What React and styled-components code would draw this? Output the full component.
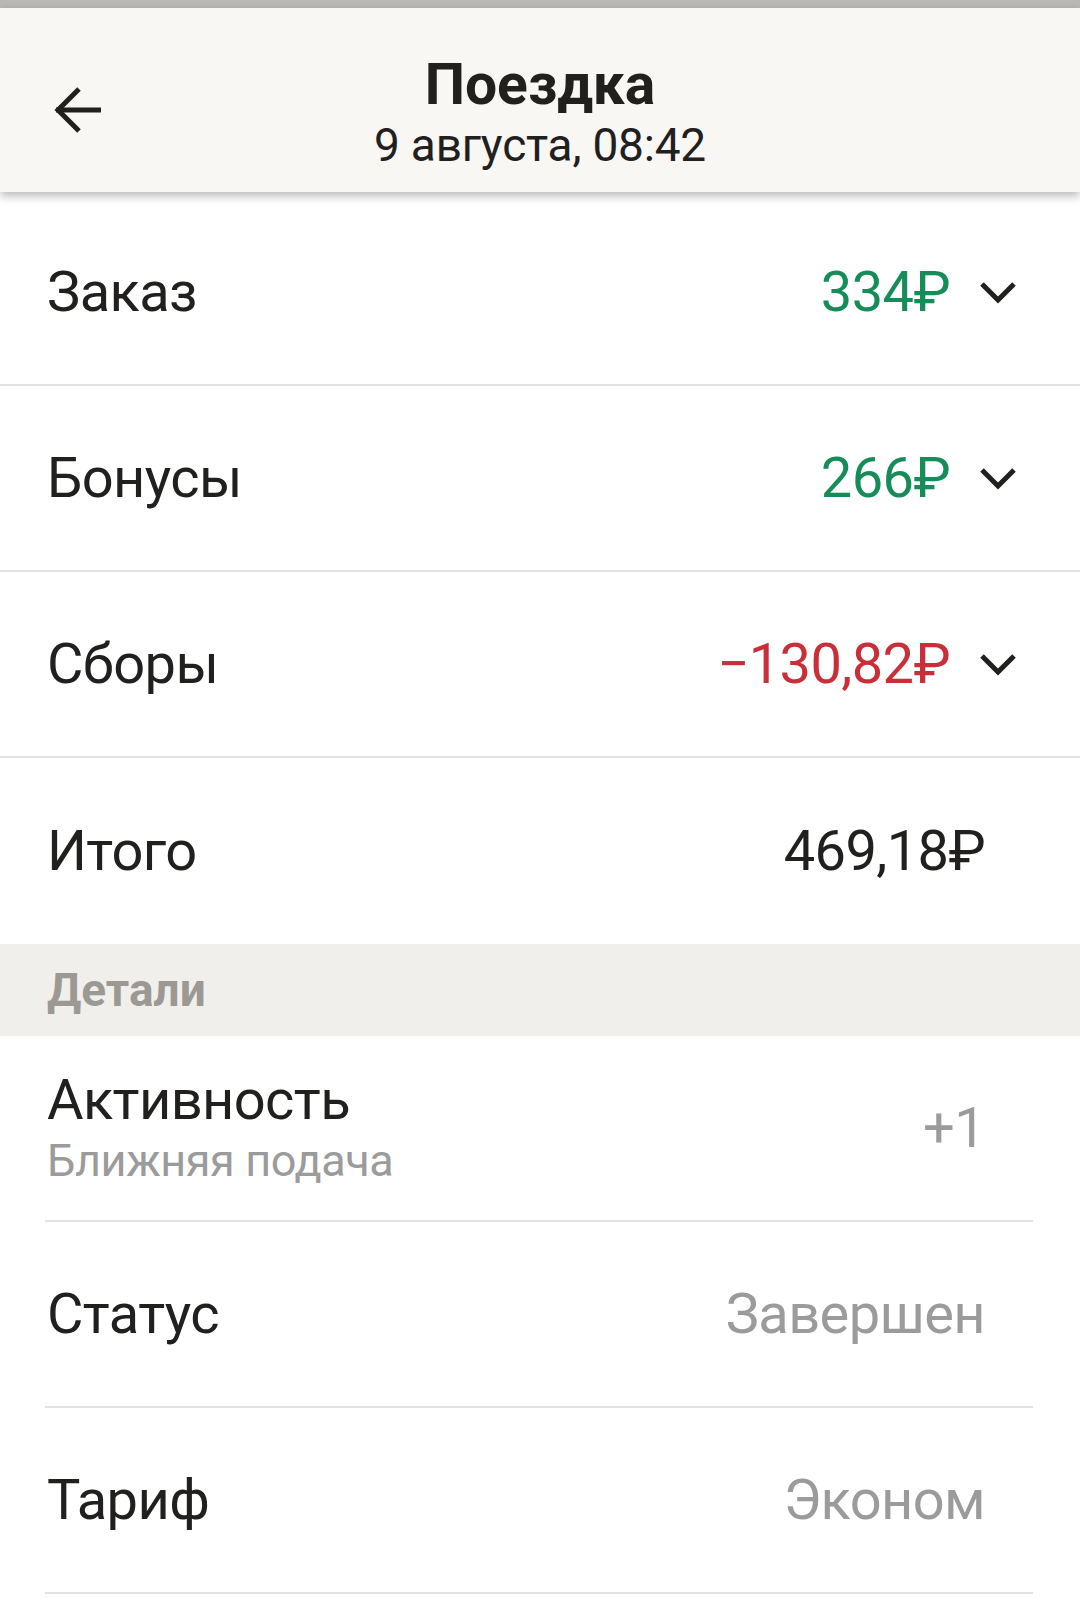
import styled, { createGlobalStyle } from "styled-components"

const GlobalStyle = createGlobalStyle`
  body {
    margin: 0;
    background: #ffffff;
    font-family: Roboto, "Noto Sans", "DejaVu Sans", sans-serif;
    color: #21201f;
  }
`

const App = () => {
  return (
    <Page>
      <GlobalStyle />
      <TopStrip />

      <Header>
        <BackButton aria-label="Назад">
          <svg width="48" height="48" viewBox="0 0 48 48" fill="none">
            <path d="M2 24H47" stroke="#21201f" strokeWidth="5" />
            <path d="M25 3L4 24L25 45" stroke="#21201f" strokeWidth="5" />
          </svg>
        </BackButton>
        <HeaderText>
          <Title>Поездка</Title>
          <Subtitle>9 августа, 08:42</Subtitle>
        </HeaderText>
        <span />
      </Header>

      <List>
        {/* суммы */}
        <Row>
          <Label>Заказ</Label>
          <Value tone="green">334₽</Value>
          <Chevron />
        </Row>
        <Row>
          <Label>Бонусы</Label>
          <Value tone="green">266₽</Value>
          <Chevron />
        </Row>
        <Row>
          <Label>Сборы</Label>
          <Value tone="red">−130,82₽</Value>
          <Chevron />
        </Row>
        <Row last>
          <Label>Итого</Label>
          <Value plain>469,18₽</Value>
        </Row>

        <SectionHeader>Детали</SectionHeader>

        {/* детали */}
        <DetailRow>
          <LabelStack>
            <Label>Активность</Label>
            <SubLabel>Ближняя подача</SubLabel>
          </LabelStack>
          <Value tone="grey">+1</Value>
        </DetailRow>
        <DetailRow>
          <Label>Статус</Label>
          <Value tone="grey">Завершен</Value>
        </DetailRow>
        <DetailRow>
          <Label>Тариф</Label>
          <Value tone="grey">Эконом</Value>
        </DetailRow>
      </List>
    </Page>
  )
}

const Chevron = () => (
  <ChevronBox>
    <svg width="36" height="24" viewBox="0 0 36 24" fill="none">
      <path d="M2 4L18 20L34 4" stroke="#21201f" strokeWidth="5" />
    </svg>
  </ChevronBox>
)

const tones = {
  green: "#168c58",
  red: "#c92f38",
  grey: "#9b9b9b",
  dark: "#21201f",
}

const Page = styled.div`
  width: 1080px;
  min-height: 1613px;
  background: #ffffff;
`

const TopStrip = styled.div`
  height: 8px;
  background: #b9bab5;
`

const Header = styled.header`
  position: relative;
  z-index: 1;
  display: grid;
  grid-template-columns: 1fr auto 1fr;
  padding: 46px 0 18px;
  background: #f9f7f4;
  box-shadow: 0 4px 9px rgba(0, 0, 0, 0.28);
`

const BackButton = styled.div`
  align-self: start;
  margin: 32px 0 0 54px;
  width: 48px;
  height: 48px;
  line-height: 0;
`

const HeaderText = styled.div`
  display: flex;
  flex-direction: column;
  align-items: center;
`

const Title = styled.h1`
  margin: 0;
  font-size: 57px;
  line-height: 62px;
  font-weight: 700;
  color: #21201f;
`

const Subtitle = styled.div`
  font-size: 46px;
  line-height: 58px;
  letter-spacing: -0.2px;
  color: #21201f;
`

const List = styled.div`
  margin-top: 8px;
`

const Row = styled.div`
  display: flex;
  align-items: center;
  height: ${(p) => (p.last ? "186px" : "184px")};
  padding: 0 64px 0 47px;
  border-bottom: ${(p) => (p.last ? "none" : "2px solid #e1e1e1")};
`

const DetailRow = styled.div`
  display: flex;
  align-items: center;
  height: 184px;
  margin: 0 47px 0 45px;
  padding: 0 48px 0 2px;
  border-bottom: 2px solid #e1e1e1;
`

const LabelStack = styled.div`
  display: flex;
  flex-direction: column;
`

const Label = styled.div`
  font-size: 56px;
  line-height: 66px;
  letter-spacing: -0.6px;
  color: #21201f;
`

const SubLabel = styled.div`
  font-size: 45px;
  line-height: 56px;
  letter-spacing: -0.4px;
  color: #9b9b9b;
`

const Value = styled.div`
  margin-left: auto;
  margin-right: ${(p) => (p.plain ? "31px" : "0")};
  font-size: 56px;
  line-height: 66px;
  letter-spacing: -0.6px;
  color: ${(p) => tones[p.tone] || tones.dark};
  white-space: nowrap;
`

const ChevronBox = styled.div`
  width: 36px;
  height: 24px;
  margin-left: 30px;
  line-height: 0;
`

const SectionHeader = styled.div`
  height: 92px;
  display: flex;
  align-items: center;
  padding-left: 47px;
  background: #f1efec;
  font-size: 46px;
  font-weight: 700;
  color: #9c9995;
`

export default App
